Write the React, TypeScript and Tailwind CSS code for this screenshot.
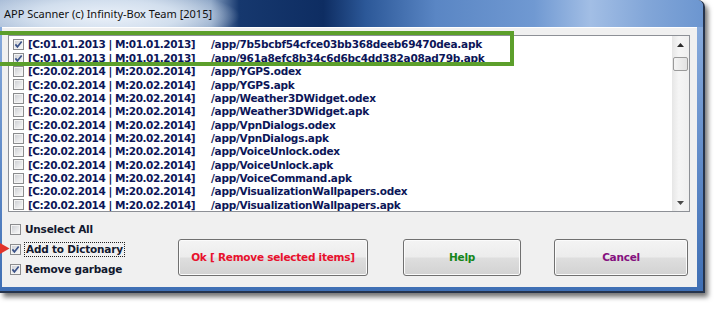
import React from 'react'

type Row = { d: string; p: string; on?: boolean }

const rows: Row[] = [
  { d: '[C:01.01.2013 | M:01.01.2013]', p: '/app/7b5bcbf54cfce03bb368deeb69470dea.apk', on: true },
  { d: '[C:01.01.2013 | M:01.01.2013]', p: '/app/961a8efc8b34c6d6bc4dd382a08ad79b.apk', on: true },
  { d: '[C:20.02.2014 | M:20.02.2014]', p: '/app/YGPS.odex' },
  { d: '[C:20.02.2014 | M:20.02.2014]', p: '/app/YGPS.apk' },
  { d: '[C:20.02.2014 | M:20.02.2014]', p: '/app/Weather3DWidget.odex' },
  { d: '[C:20.02.2014 | M:20.02.2014]', p: '/app/Weather3DWidget.apk' },
  { d: '[C:20.02.2014 | M:20.02.2014]', p: '/app/VpnDialogs.odex' },
  { d: '[C:20.02.2014 | M:20.02.2014]', p: '/app/VpnDialogs.apk' },
  { d: '[C:20.02.2014 | M:20.02.2014]', p: '/app/VoiceUnlock.odex' },
  { d: '[C:20.02.2014 | M:20.02.2014]', p: '/app/VoiceUnlock.apk' },
  { d: '[C:20.02.2014 | M:20.02.2014]', p: '/app/VoiceCommand.apk' },
  { d: '[C:20.02.2014 | M:20.02.2014]', p: '/app/VisualizationWallpapers.odex' },
  { d: '[C:20.02.2014 | M:20.02.2014]', p: '/app/VisualizationWallpapers.apk' },
  { d: '[C:20.02.2014 | M:20.02.2014]', p: '/app/VideoPlayer.odex' },
]

function Box({ on }: { on?: boolean }) {
  return (
    <svg width="11" height="11" viewBox="0 0 11 11" className="shrink-0">
      <rect x="0.5" y="0.5" width="10" height="10" fill="#f4f4f4" stroke="#8b8c8e" />
      <rect x="2" y="2" width="7" height="7" fill="url(#cbfill)" />
      {on && <path d="M2.4 5.4 L4.4 7.9 L8.7 2.4" fill="none" stroke="#3a5288" strokeWidth="1.7" />}
    </svg>
  )
}

function Btn({ label, color, w }: { label: string; color: string; w: string }) {
  return (
    <div
      className={`${w} h-[37px] shrink-0 rounded-[3px] border border-[#707070] bg-[linear-gradient(to_bottom,#f4f4f4_0%,#ececec_48%,#dedede_52%,#d2d2d2_100%)] shadow-[inset_0_0_0_1px_#fbfbfb] flex items-center justify-center`}
    >
      <span className={`text-[10.5px] tracking-[-0.25px] font-bold ${color}`}>{label}</span>
    </div>
  )
}

export default function App() {
  return (
    <div className="relative w-[721px] h-[310px] overflow-hidden bg-white font-['DejaVu_Sans',sans-serif]">
      <svg width="0" height="0" className="absolute">
        <defs>
          <linearGradient id="cbfill" x1="0" y1="0" x2="1" y2="1">
            <stop offset="0" stopColor="#cfd1d5" />
            <stop offset="1" stopColor="#f7f7f7" />
          </linearGradient>
        </defs>
      </svg>

      {/* window */}
      <div className="w-[705px] h-[293px] rounded-tr-[7px] bg-[#26344c] pr-[2px] pb-[2px] shadow-[3px_4px_5px_rgba(0,0,0,0.55)]">
        <div className="h-full flex flex-col rounded-tr-[6px] bg-[linear-gradient(to_bottom,#8fb1e0,#5d88c6_60%,#3f6fb4)] overflow-hidden">
          {/* title bar */}
          <div className="h-[27px] shrink-0 flex items-center pl-[4px] bg-[radial-gradient(ellipse_135px_28px_at_105px_16px,rgba(236,242,250,0.97)_0%,rgba(214,226,240,0.9)_55%,rgba(160,185,215,0)_100%),linear-gradient(to_right,#a7bbd6_0%,#b8c9de_20%,#8aa3c4_30%,#16386e_34%,#0e2d62_46%,#2c5898_52%,#5a86c4_62%,#7099d2_76%,#a2bee5_84%,#82a6d8_92%,#6c96d0_100%)]">
            <span className="text-[11px] text-[#101010] font-['Noto_Sans',sans-serif] leading-none">
              APP Scanner (c) Infinity-Box Team [2015]
            </span>
          </div>

          {/* client */}
          <div className="flex-1 flex flex-col pl-[2px] pr-[6px] pb-[4px]">
            <div className="flex-1 flex flex-col bg-[#f0f0f0] border-t border-white pt-[7px]">
              {/* list box */}
              <div className="ml-[6px] mr-[7px] h-[177px] border border-[#8d9096] bg-white flex overflow-hidden">
                <div className="flex-1 pt-[2px] overflow-hidden">
                  {rows.map((r, i) => (
                    <div key={i} className="h-[13.36px] flex items-center pl-[4px] text-[10.5px] font-bold text-[#0c1658] leading-none whitespace-nowrap">
                      <Box on={r.on} />
                      <span className="ml-[4px] w-[183px] shrink-0 tracking-[-0.45px]">{r.d}</span>
                      <span className="tracking-[-0.25px]">{r.p}</span>
                    </div>
                  ))}
                </div>
                {/* scrollbar */}
                <div className="w-[17px] shrink-0 flex flex-col items-center bg-[linear-gradient(to_right,#e6e6e6,#f5f5f5_40%,#efefef)]">
                  <div className="h-[17px] w-full flex items-center justify-center">
                    <svg width="7" height="4" viewBox="0 0 7 4"><path d="M0 4 L3.5 0 L7 4 Z" fill="#2b2b2b" /></svg>
                  </div>
                  <div className="mt-[4px] w-[15px] h-[14px] rounded-[2px] border border-[#9a9a9a] bg-[linear-gradient(to_right,#f4f4f4,#e2e2e2)]" />
                  <div className="flex-1" />
                  <div className="h-[17px] w-full flex items-center justify-center">
                    <svg width="7" height="4" viewBox="0 0 7 4"><path d="M0 0 L3.5 4 L7 0 Z" fill="#4a4a4a" /></svg>
                  </div>
                </div>
              </div>

              {/* bottom */}
              <div className="flex">
                <div className="w-[176px] shrink-0 pl-[8px] pt-[12px] flex flex-col gap-[9px] text-[10.5px] tracking-[-0.2px] font-bold text-[#12182e] leading-none">
                  <div className="h-[11px] flex items-center gap-[4px]">
                    <Box />
                    <span>Unselect All</span>
                  </div>
                  <div className="h-[11px] flex items-center gap-[3px]">
                    <Box on />
                    <span className="h-[15px] px-[1px] flex items-center border border-dotted border-[#222]">Add to Dictonary</span>
                  </div>
                  <div className="h-[11px] flex items-center gap-[4px]">
                    <Box on />
                    <span>Remove garbage</span>
                  </div>
                </div>
                <div className="pt-[27px] flex">
                  <Btn label="Ok [ Remove selected items]" color="text-[#e8112d]" w="w-[190px]" />
                  <div className="w-[35px]" />
                  <Btn label="Help" color="text-[#15861a]" w="w-[118px]" />
                  <div className="w-[33px]" />
                  <Btn label="Cancel" color="text-[#85117f]" w="w-[134px]" />
                </div>
              </div>
            </div>
          </div>
        </div>
      </div>

      {/* annotation: green highlight */}
      <div className="absolute left-[-10px] top-[31px] w-[524px] h-[35px] border-4 border-[#5c9f2b]" />

      {/* annotation: red arrow */}
      <svg className="absolute left-0 top-[243px]" width="10" height="11" viewBox="0 0 10 11">
        <path d="M0 0 L9.5 5.5 L0 11 Z" fill="#e2332a" />
      </svg>
    </div>
  )
}
